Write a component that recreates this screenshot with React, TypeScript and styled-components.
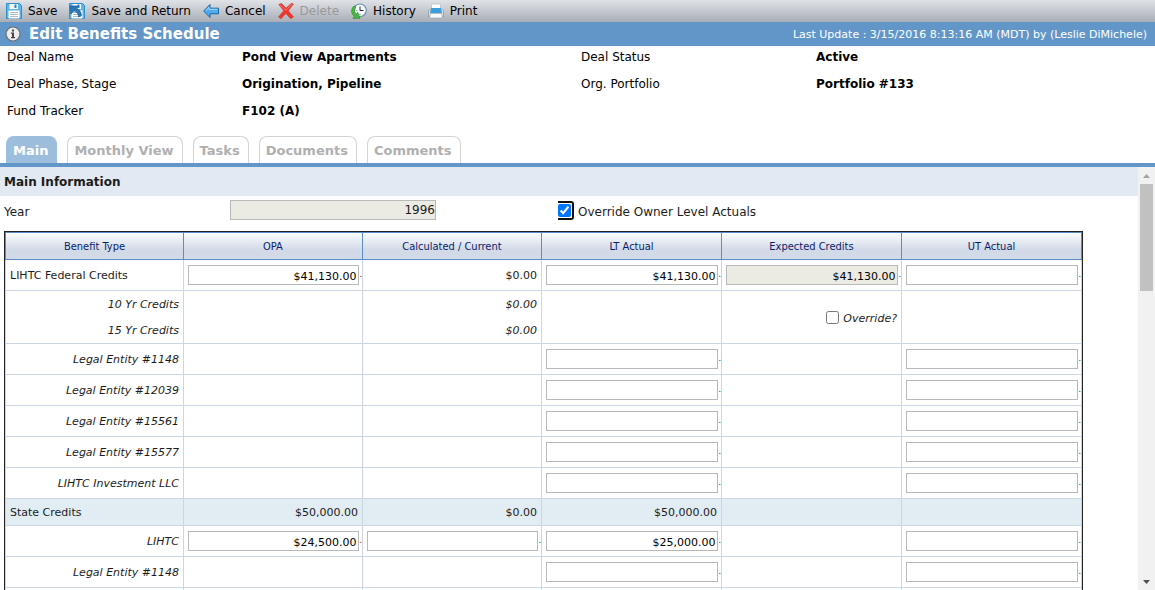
import React, { useState } from "react";
import styled, { createGlobalStyle, css } from "styled-components";

const Global = createGlobalStyle`
  *, *::before, *::after { box-sizing: border-box; }
  body {
    margin: 0;
    background: #fff;
    color: #1c1c1c;
    font: 12px/16px Verdana, "DejaVu Sans", sans-serif;
  }
`;

const Page = styled.div`
  display: flex;
  flex-direction: column;
  height: 100vh;
  overflow: hidden;
`;

const Toolbar = styled.nav`
  flex: none;
  display: flex;
  align-items: center;
  gap: 12px;
  height: 22px;
  padding: 0 6px;
  background: linear-gradient(#e0e2e7, #a9adb6);
`;

const ToolButton = styled.button`
  display: flex;
  align-items: center;
  gap: 6px;
  height: 22px;
  padding: 0;
  border: 0;
  background: none;
  color: #000;
  font: inherit;
  white-space: nowrap;
  &:disabled { color: #999; }
  svg { flex: none; }
`;

const TitleBar = styled.header`
  flex: none;
  display: flex;
  align-items: center;
  gap: 8px;
  height: 24px;
  padding: 0 8px 0 5px;
  background: #6396c8;
  color: #fff;
`;

const Title = styled.h1`
  flex: 1;
  margin: 0;
  font-size: 15px;
  line-height: 24px;
  font-weight: bold;
`;

const Updated = styled.span`
  padding-top: 2px;
  font-size: 11px;
`;

const Summary = styled.dl`
  flex: none;
  display: grid;
  grid-template-columns: 235fr 339fr 235fr 339fr;
  row-gap: 11px;
  margin: 0;
  padding: 3px 0 17px 7px;
  color: #000;
  dt, dd { margin: 0; }
  dd { font-weight: bold; }
`;

const Tabs = styled.div`
  flex: none;
  display: flex;
  gap: 10px;
  padding: 0 6px;
  border-bottom: 4px solid #6396c8;
`;

const Tab = styled.button<{ $active?: boolean }>`
  height: 27px;
  padding: 2px 8px 0 6px;
  border: 1px solid #d4d4d4;
  border-bottom: 0;
  border-radius: 8px 8px 0 0;
  background: #fff;
  color: #b0b0b0;
  font: bold 13px/24px Verdana, "DejaVu Sans", sans-serif;
  ${(p) => p.$active && css`
    background: #9dbddd;
    border-color: #9dbddd;
    color: #fff;
  `}
`;

const Body = styled.div`
  flex: 1;
  display: flex;
  min-height: 0;
`;

const Content = styled.main`
  flex: 1;
  min-width: 0;
  overflow-y: auto;
  scrollbar-width: none;
`;

const SectionTitle = styled.h2`
  margin: 0;
  padding: 2px 4px 0;
  background: #e2e9f2;
  font-size: 12px;
  line-height: 27px;
`;

const YearRow = styled.div`
  display: grid;
  grid-template-columns: 226fr 328fr 580fr;
  align-items: start;
  height: 35px;
  padding: 4px 0 0 4px;
  line-height: 24px;
`;

const YearInput = styled.input`
  width: 206px;
  height: 20px;
  padding: 0;
  border: 1px solid #b9b9b9;
  background: #ebebe4;
  color: #1c1c1c;
  font: inherit;
  text-align: right;
`;

const CheckLabel = styled.label`
  display: flex;
  align-items: center;
  gap: 4px;
`;

const CheckFrame = styled.span`
  display: flex;
  margin-bottom: 4px;
  padding: 1px 1px 1px 0;
  border: 2px solid #101010;
  border-left: 0;
  border-radius: 0 3px 3px 0;
`;

const Check = styled.input.attrs({ type: "checkbox" })`
  width: 13px;
  height: 13px;
  margin: 0;
`;

const Grid = styled.table`
  width: calc(100% - 59px);
  margin-left: 4px;
  border: 1px solid #222;
  border-collapse: separate;
  border-spacing: 0;
  table-layout: fixed;
  font-size: 11px;
`;

const Head = styled.th<{ $wide: boolean }>`
  width: ${(p) => (p.$wide ? "auto" : "16.62%")};
  height: 28px;
  padding: 2px 0 0;
  border: 1px solid #5c8cca;
  border-left-width: 0;
  background: linear-gradient(#fafeff, #d2d9e7 65%);
  color: #0b1c6b;
  font: 11px/16px Tahoma, "DejaVu Sans Condensed", sans-serif;
  &:first-child { border-left-width: 1px; }
`;

const Row = styled.tr<{ $shaded?: boolean }>`
  background: ${(p) => (p.$shaded ? "#e1ecf3" : "#fff")};
`;

const Cell = styled.td<{ $size: "small" | "normal" | "tall" }>`
  height: ${(p) => ({ small: 27, normal: 31, tall: 53 })[p.$size]}px;
  padding: 0 4px;
  border: 1px solid #ccd5e4;
  border-width: 0 1px 1px 0;
  font-style: ${(p) => (p.$size === "tall" ? "italic" : "normal")};
  text-align: right;
`;

const Name = styled(Cell).attrs({ as: "th", scope: "row" })<{ $main?: boolean }>`
  border-left-width: 1px;
  font-weight: normal;
  font-style: ${(p) => (p.$main ? "normal" : "italic")};
  text-align: ${(p) => (p.$main ? "left" : "right")};
`;

const Money = styled.span`
  display: flex;
  align-items: center;
  height: 30px;
  margin-right: -4px;
  font-size: 8px;
  line-height: 20px;
`;

const MoneyInput = styled.input`
  flex: 1;
  min-width: 0;
  height: 20px;
  padding: 2px 2px 0;
  border: 1px solid #b9b9b9;
  background: #fff;
  color: #000;
  font: 11px/16px Verdana, "DejaVu Sans", sans-serif;
  text-align: right;
  &:disabled { background: #ebebe4; }
`;

const Line = styled.span`
  display: block;
  padding-top: 2px;
  line-height: 24px;
`;

const Override = styled.label`
  display: flex;
  align-items: center;
  justify-content: flex-end;
  gap: 4px;
  padding-top: 4px;
  ${Check} { margin-bottom: 4px; }
`;

const ScrollTrack = styled.div`
  flex: none;
  display: flex;
  flex-direction: column;
  align-items: center;
  width: 17px;
  background: #f1f1f1;
`;

const ScrollArrow = styled.button`
  display: grid;
  place-items: center;
  width: 17px;
  height: 17px;
  padding: 0;
  border: 0;
  background: none;
`;

const ScrollThumb = styled.div`
  width: 13px;
  height: 107px;
  margin-bottom: auto;
  background: #c1c1c1;
`;

const Floppy = () => (
  <g>
    <path d="M.5.500h13l2 2v13H.5z" fill="#5fb4e8" stroke="#2b8fce" />
    <path d="M3.500 1h8.500v5H3.500z" fill="#f5f9fc" />
    <path d="M8.500 1.500h2v3.500h-2z" fill="#2b7fc0" />
    <path d="M2.500 7.500h11v8h-11z" fill="#fff" />
    <path d="M4 9.500h8M4 11.500h8M4 13.500h8" stroke="#b4bcc4" />
  </g>
);

const SaveIcon = () => (
  <svg width="16" height="16" viewBox="0 0 16 16"><Floppy /></svg>
);

const SaveReturnIcon = () => (
  <svg width="16" height="16" viewBox="0 0 16 16">
    <Floppy />
    <path d="M1 3h8.500L7.500 5.200c3 1.300 4.800 4 5 7.300l-3 1.500C9.500 11 8 9 5 7.800L2 11z" fill="#2878b8" stroke="#175a92" strokeWidth=".7" />
  </svg>
);

const CancelIcon = () => (
  <svg width="16" height="16" viewBox="0 0 16 16">
    <path d="M.7 8 7 1.500v3.700h8.500v5.600H7v3.700z" fill="#4fabeb" stroke="#1669a8" />
    <path d="M2.800 7.600 6 4.300v2h8.500" fill="none" stroke="#a5dafa" />
  </svg>
);

const DeleteIcon = () => (
  <svg width="16" height="16" viewBox="0 0 16 16">
    <path d="M.8 1.500 3.500.5 8 5.200 13.500.3l2 .6L10.300 7.800l5.200 6-2.800 1.900L7.800 10.400 3 15.700.5 14 5.700 7.700z" fill="#f0352b" stroke="#c93a34" strokeWidth=".6" />
    <path d="M2 2 8 7.300 14 1.200" fill="none" stroke="#ff8b80" strokeWidth=".8" />
  </svg>
);

const HistoryIcon = () => (
  <svg width="16" height="16" viewBox="0 0 16 16">
    <circle cx="9" cy="7.300" r="6.300" fill="#f7fafc" stroke="#6d93b3" strokeWidth="1.200" />
    <path d="M9 3.500v4h3.500" fill="none" stroke="#222" />
    <path d="M9 10.800v1.200M5.300 7.500h1" stroke="#777" />
    <path d="M3.300 2.800C-.6 6 .2 11 3.200 13.300L2 15.500l7-.2L6.700 9.300 5.500 11C3.300 9.500 3.300 6.500 5 4z" fill="#43b944" stroke="#278919" strokeWidth=".6" />
  </svg>
);

const PrintIcon = () => (
  <svg width="16" height="16" viewBox="0 0 16 16">
    <path d="M3.500 1h9v6h-9z" fill="#fff" stroke="#b9c3cc" strokeWidth=".8" />
    <path d="M.5 8 2.500 6h11l2 2v5.500H.5z" fill="#dce2e8" stroke="#8b97a2" strokeWidth=".8" />
    <path d="M3.300 5h9.400l1.300 5H2z" fill="#3a9edc" />
    <path d="M2.500 10.500h11l1 4.500h-13z" fill="#f6f8fa" stroke="#9aa6b1" strokeWidth=".7" />
  </svg>
);

const InfoIcon = () => (
  <svg width="16" height="16" viewBox="0 0 16 16" role="img" aria-label="Information">
    <circle cx="8" cy="8" r="7" fill="#ececec" stroke="#6b6e70" strokeWidth="1.200" />
    <path d="M7 3.500h2v2H7zM6 6.500h3v4.500h1v1.200H6V11h1V7.700H6z" fill="#444" />
  </svg>
);

const tools = [
  { label: "Save", Icon: SaveIcon },
  { label: "Save and Return", Icon: SaveReturnIcon },
  { label: "Cancel", Icon: CancelIcon },
  { label: "Delete", Icon: DeleteIcon, disabled: true },
  { label: "History", Icon: HistoryIcon },
  { label: "Print", Icon: PrintIcon },
];

const summary = [
  ["Deal Name", "Pond View Apartments"],
  ["Deal Status", "Active"],
  ["Deal Phase, Stage", "Origination, Pipeline"],
  ["Org. Portfolio", "Portfolio #133"],
  ["Fund Tracker", "F102 (A)"],
];

const tabs = ["Main", "Monthly View", "Tasks", "Documents", "Comments"];
const columns = ["Benefit Type", "OPA", "Calculated / Current", "LT Actual", "Expected Credits", "UT Actual"];

type Value = null | string | string[] | { input: string; disabled?: boolean } | { override: true };
type Entry = { names: string[]; main?: boolean; size?: "small" | "tall"; values: Value[] };

const entity = (name: string): Entry => ({
  names: [name],
  values: [null, null, { input: "" }, null, { input: "" }],
});

const entries: Entry[] = [
  {
    names: ["LIHTC Federal Credits"],
    main: true,
    values: [{ input: "$41,130.00" }, "$0.00", { input: "$41,130.00" }, { input: "$41,130.00", disabled: true }, { input: "" }],
  },
  {
    names: ["10 Yr Credits", "15 Yr Credits"],
    size: "tall",
    values: [null, ["$0.00", "$0.00"], null, { override: true }, null],
  },
  entity("Legal Entity #1148"),
  entity("Legal Entity #12039"),
  entity("Legal Entity #15561"),
  entity("Legal Entity #15577"),
  entity("LIHTC Investment LLC"),
  {
    names: ["State Credits"],
    main: true,
    size: "small",
    values: ["$50,000.00", "$0.00", "$50,000.00", null, null],
  },
  {
    names: ["LIHTC"],
    values: [{ input: "$24,500.00" }, { input: "" }, { input: "$25,000.00" }, null, { input: "" }],
  },
  entity("Legal Entity #1148"),
  { names: [], values: [null, null, null, null, null] },
];

function CellValue({ value, label }: { value: Value; label: string }) {
  if (value === null) return null;
  if (typeof value === "string") return <Line>{value}</Line>;
  if (Array.isArray(value)) return <>{value.map((v, i) => <Line key={i}>{v}</Line>)}</>;
  if ("override" in value) return <Override><Check />Override?</Override>;
  return (
    <Money>
      <MoneyInput aria-label={label} defaultValue={value.input} disabled={value.disabled} />.
    </Money>
  );
}

export default function App() {
  const [tab, setTab] = useState("Main");
  return (
    <Page>
      <Global />
      <Toolbar>
        {tools.map(({ label, Icon, disabled }) => (
          <ToolButton key={label} disabled={disabled}><Icon />{label}</ToolButton>
        ))}
      </Toolbar>
      <TitleBar>
        <InfoIcon />
        <Title>Edit Benefits Schedule</Title>
        <Updated>Last Update : 3/15/2016 8:13:16 AM (MDT) by (Leslie DiMichele)</Updated>
      </TitleBar>
      <Summary>
        {summary.map(([term, text]) => (
          <React.Fragment key={term}><dt>{term}</dt><dd>{text}</dd></React.Fragment>
        ))}
      </Summary>
      <Tabs role="tablist">
        {tabs.map((t) => (
          <Tab key={t} role="tab" aria-selected={t === tab} $active={t === tab} onClick={() => setTab(t)}>{t}</Tab>
        ))}
      </Tabs>
      <Body>
        <Content>
          <SectionTitle>Main Information</SectionTitle>
          <YearRow>
            <label htmlFor="year">Year</label>
            <YearInput id="year" value="1996" readOnly />
            <CheckLabel>
              <CheckFrame><Check defaultChecked /></CheckFrame>
              Override Owner Level Actuals
            </CheckLabel>
          </YearRow>
          <Grid>
            <thead>
              <tr>{columns.map((c, i) => <Head key={c} scope="col" $wide={i > 2}>{c}</Head>)}</tr>
            </thead>
            <tbody>
              {entries.map((e, i) => (
                <Row key={i} $shaded={e.size === "small"}>
                  <Name $size={e.size ?? "normal"} $main={e.main}>
                    {e.names.map((n) => <Line key={n}>{n}</Line>)}
                  </Name>
                  {e.values.map((v, c) => (
                    <Cell key={c} $size={e.size ?? "normal"}>
                      <CellValue value={v} label={`${e.names[0]}, ${columns[c + 1]}`} />
                    </Cell>
                  ))}
                </Row>
              ))}
            </tbody>
          </Grid>
        </Content>
        <ScrollTrack>
          <ScrollArrow aria-label="Scroll up">
            <svg width="7" height="4" viewBox="0 0 7 4"><path d="M0 4 3.500 0 7 4z" fill="#a3a3a3" /></svg>
          </ScrollArrow>
          <ScrollThumb />
          <ScrollArrow aria-label="Scroll down">
            <svg width="7" height="4" viewBox="0 0 7 4"><path d="M0 0h7L3.500 4z" fill="#505050" /></svg>
          </ScrollArrow>
        </ScrollTrack>
      </Body>
    </Page>
  );
}
